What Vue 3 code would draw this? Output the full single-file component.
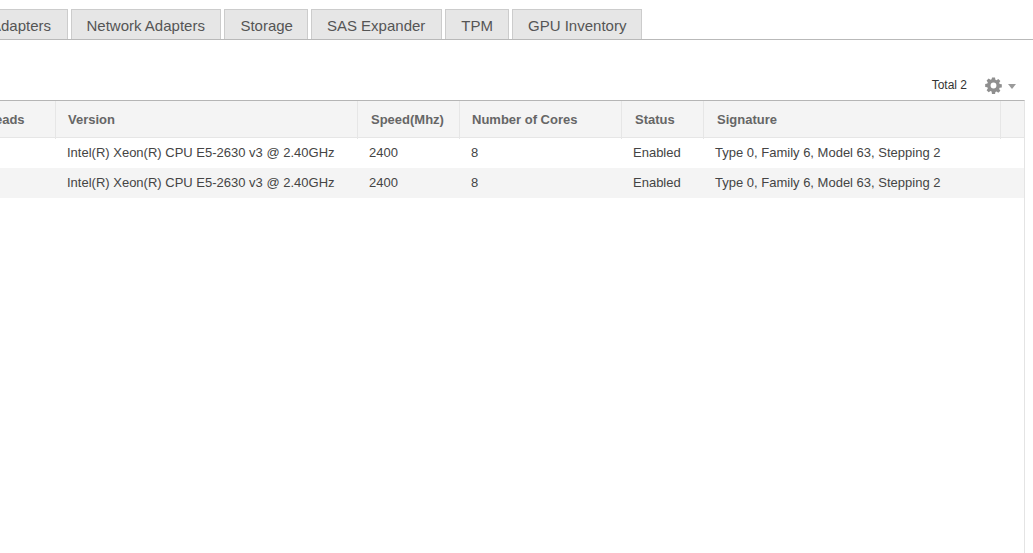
<script setup>
const tabs = ['Adapters', 'Network Adapters', 'Storage', 'SAS Expander', 'TPM', 'GPU Inventory']
const cols = ['Threads', 'Version', 'Speed(Mhz)', 'Number of Cores', 'Status', 'Signature', '']
const row = ['', 'Intel(R) Xeon(R) CPU E5-2630 v3 @ 2.40GHz', '2400', '8', 'Enabled', 'Type 0, Family 6, Model 63, Stepping 2', '']
const rows = [row, row]
</script>

<template>
  <div class="page">
    <div class="tabs">
      <div v-for="t in tabs" :key="t" class="tab">{{ t }}</div>
    </div>
    <div class="toolbar">
      <span class="total">Total 2</span>
      <svg class="gear" width="17" height="17" viewBox="0 0 18 18">
        <path fill="#8f8f8f" fill-rule="evenodd" d="M7.4 0.6h3.2l.4 2.3 1.2.5 1.9-1.3 2.2 2.2-1.3 1.9.5 1.2 2.3.4v3.2l-2.3.4-.5 1.2 1.3 1.9-2.2 2.2-1.9-1.3-1.2.5-.4 2.3H7.4L7 15.4l-1.2-.5-1.9 1.3-2.2-2.2L3 12.1l-.5-1.2-2.3-.4V7.3l2.3-.4.5-1.2-1.3-1.9 2.2-2.2 1.9 1.3L7 2.4zM9 5.9a3.1 3.1 0 1 0 0 6.2 3.1 3.1 0 0 0 0-6.2z"/>
      </svg>
      <span class="caret"></span>
    </div>
    <div class="grid">
      <div class="head">
        <div v-for="c in cols" :key="c" class="hcell">{{ c }}</div>
      </div>
      <div v-for="(r, i) in rows" :key="i" class="row">
        <div v-for="(v, j) in r" :key="j" class="cell">{{ v }}</div>
      </div>
    </div>
  </div>
</template>

<style>
html, body { margin: 0; background: #fff; overflow: hidden; }
</style>

<style scoped>
.page {
  width: 1033px;
  height: 553px;
  overflow: hidden;
  font-family: "Liberation Sans", Arial, sans-serif;
  background: #fff;
}
.tabs {
  display: flex;
  gap: 3px;
  height: 30px;
  padding-top: 9px;
  margin-left: -60px;
  width: 1093px;
  border-bottom: 1px solid #b9b9b9;
}
.tab {
  box-sizing: border-box;
  height: 30px;
  padding: 0 15px;
  line-height: 32px;
  font-size: 15px;
  color: #555;
  background: #e6e6e6;
  border: 1px solid #ccc;
  border-bottom: 0;
  white-space: nowrap;
}
.tab:first-child {
  width: 128px;
  padding: 0 16px 0 0;
  text-align: right;
}
.tab:nth-child(2) { padding: 0 15.5px 0 14.5px; }
.tab:nth-child(3) { padding: 0 14px 0 15px; }
.tab:nth-child(4) { padding: 0 16px 0 15px; }
.toolbar {
  display: flex;
  align-items: center;
  justify-content: flex-end;
  height: 30px;
  margin-top: 30px;
  padding-right: 17px;
}
.total {
  font-size: 12px;
  color: #333;
  margin-right: 18px;
}
.gear { flex: none; }
.caret {
  width: 0;
  height: 0;
  margin-left: 6px;
  margin-top: 2px;
  border-left: 4px solid transparent;
  border-right: 4px solid transparent;
  border-top: 5px solid #9a9a9a;
}
.grid {
  margin-left: -36px;
  width: 1061px;
  border-top: 1px solid #b5b5b5;
  border-right: 1px solid #e4e4e4;
  height: 453px;
  box-sizing: border-box;
}
.head, .row {
  display: grid;
  grid-template-columns: 92px 302px 102px 162px 82px 297px 1fr;
}
.head {
  height: 37px;
  box-sizing: border-box;
  background: #f4f4f4;
  border-bottom: 1px solid #e6e6e6;
}
.hcell {
  padding-left: 12px;
  border-right: 1px solid #e6e6e6;
  font-size: 13px;
  font-weight: 700;
  line-height: 38px;
  color: #666;
  white-space: nowrap;
}
.hcell:first-child { padding-left: 10px; }
.hcell:nth-child(3), .hcell:nth-child(5), .hcell:nth-child(6) { padding-left: 13px; }
.hcell:last-child { border-right: 0; }
.row {
  height: 30px;
}
.row:nth-child(odd) { background: #f4f4f4; }
.cell {
  padding-left: 11px;
  font-size: 13px;
  line-height: 30px;
  color: #444;
  white-space: nowrap;
}
</style>
